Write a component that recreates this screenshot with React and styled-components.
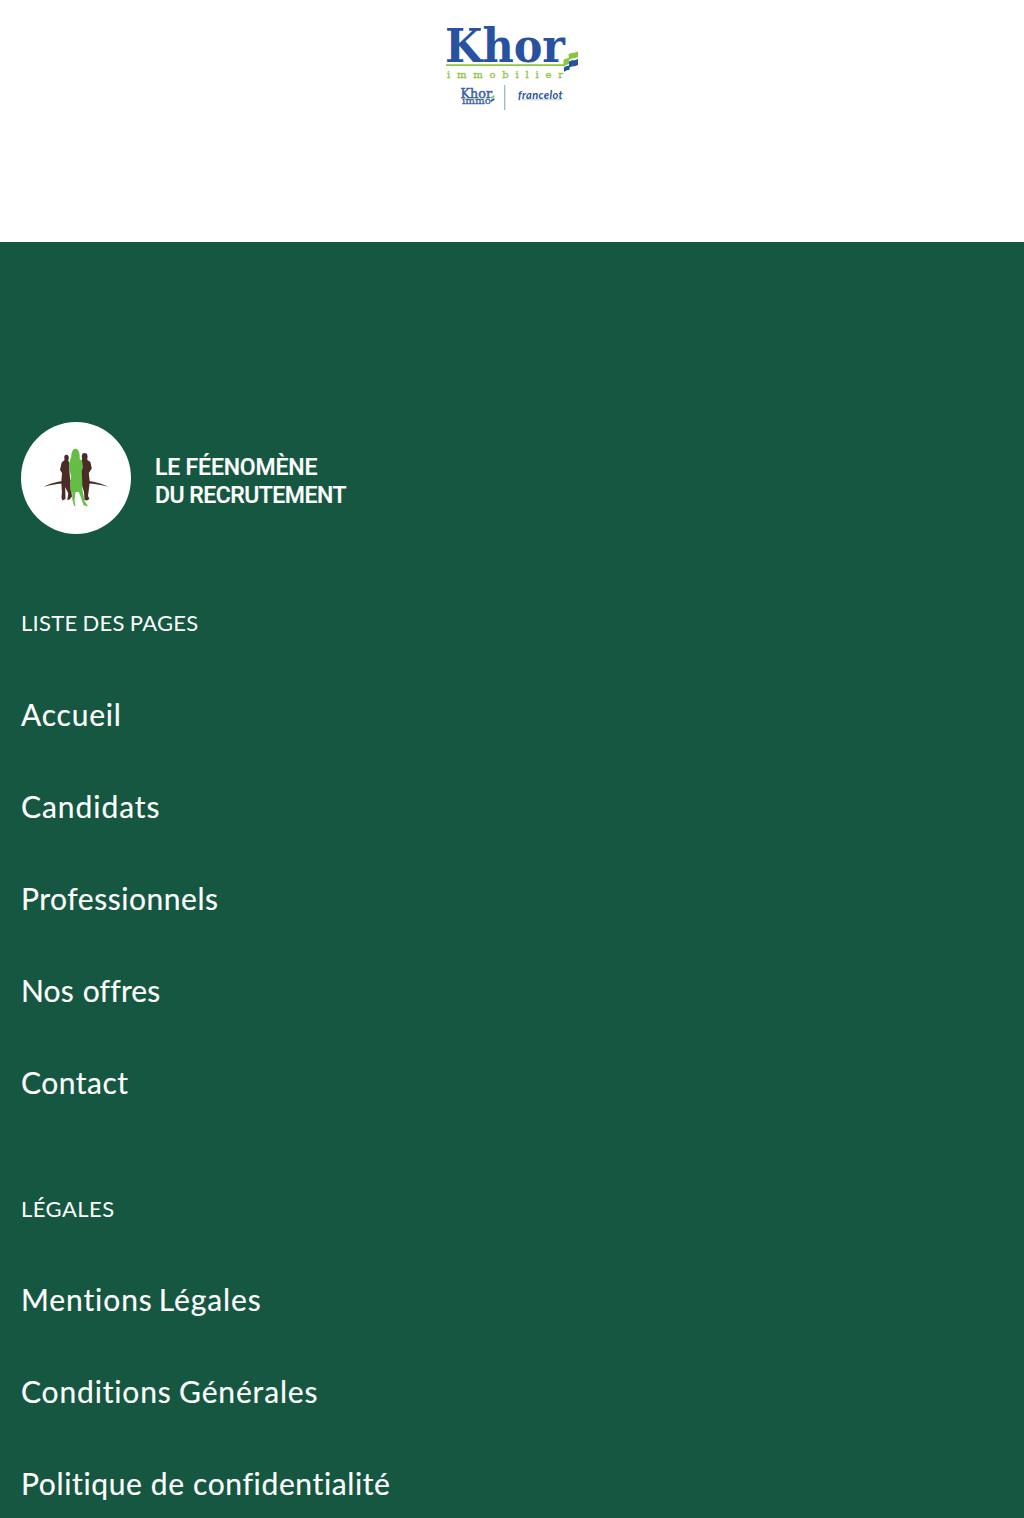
import React from "react";
import styled, { createGlobalStyle } from "styled-components";

const GlobalStyle = createGlobalStyle`
  * { box-sizing: border-box; }
  body { margin: 0; background: #fff; font-family: Lato, sans-serif; }
`;

const Page = styled.div`
  height: 1518px;
  overflow: hidden;
  display: flex;
  flex-direction: column;
`;

const PartnerStrip = styled.header`
  flex: none;
  height: 242px;
  display: flex;
  justify-content: center;
  align-items: flex-start;
`;

const PartnerLogo = styled.svg`
  width: 140px;
  height: 116px;
  display: block;
`;

const Footer = styled.footer`
  flex: 1;
  background: #155740;
  color: #fff;
  padding: 180px 20px 0 21px;
`;

const Brand = styled.a`
  display: flex;
  align-items: center;
  gap: 24px;
  height: 112px;
  margin-bottom: 43px;
`;

const Emblem = styled.svg`
  flex: none;
  width: 110px;
  height: 112px;
`;

const BrandName = styled.div`
  font-family: Roboto, sans-serif;
  font-weight: 500;
  font-size: 23px;
  line-height: 27.5px;
  padding-top: 7px;
  -webkit-text-stroke: 0.2px #fff;
`;

const BrandLine = styled.span`
  display: block;
  width: max-content;
  letter-spacing: ${(p) => p.$tracking}px;
`;

const LinkGroup = styled.nav`
  margin-bottom: 34px;
`;

const GroupTitle = styled.h2`
  margin: 0;
  height: ${(p) => p.$height}px;
  display: flex;
  align-items: center;
  font-size: 22px;
  font-weight: 400;
  line-height: 26px;
  text-transform: uppercase;
  word-spacing: -1px;
  letter-spacing: ${(p) => p.$tracking}px;
`;

const FooterLink = styled.a`
  height: 92px;
  width: max-content;
  display: flex;
  align-items: center;
  padding-bottom: 2px;
  font-size: 30px;
  line-height: 36px;
  -webkit-text-stroke: 0.15px #fff;
  letter-spacing: ${(p) => p.$tracking}px;
  word-spacing: ${(p) => p.$wordGap || 0}px;
`;

const groups = [
  {
    title: "Liste des pages",
    tracking: 0.3,
    height: 92,
    links: [
      ["Accueil", 0.8],
      ["Candidats", 0.94],
      ["Professionnels", 0.53],
      ["Nos offres", 0.15, 1],
      ["Contact", 0.5],
    ],
  },
  {
    title: "Légales",
    tracking: 0.45,
    height: 91,
    links: [
      ["Mentions Légales", 0.9, -2.5],
      ["Conditions Générales", 0.84, -1],
      ["Politique de confidentialité", 0.63],
    ],
  },
];

function KhorLogo() {
  return (
    <PartnerLogo viewBox="442 0 140 116" role="img" aria-label="Khor immobilier">
      <g fontFamily="'DejaVu Serif', serif" fontWeight="700">
        <text x="445" y="62" fontSize="47" fill="#2852a0" textLength="120" lengthAdjust="spacingAndGlyphs">Khor</text>
        <text x="447" y="77.5" fontSize="10" fontWeight="400" fill="#8cc63f" stroke="#8cc63f" strokeWidth="0.3" textLength="116" lengthAdjust="spacing">immobilier</text>
        <text x="460.5" y="97.5" fontSize="12.5" fontWeight="400" fill="#3c60a6" stroke="#3c60a6" strokeWidth="0.5" textLength="31.5" lengthAdjust="spacingAndGlyphs">Khor</text>
        <text x="462" y="104" fontSize="8.5" fontWeight="400" fill="#3c60a6" stroke="#3c60a6" strokeWidth="0.3" textLength="29" lengthAdjust="spacingAndGlyphs">immo</text>
      </g>
      <path d="M446 65.2H564" stroke="#8cc63f" strokeWidth="1.7" />
      <path d="M568.5 54.5C571.5 52 574 53.5 578 51.5V57C574.5 59 572 57.5 569 60Z" fill="#8cc63f" />
      <path d="M563.5 60C565.5 58 567 58.5 569 58V64C567 64.5 565.5 65 563.5 67Z" fill="#8cc63f" />
      <path d="M569 61.5C572 59.5 574.5 61 578 59V65C574.5 67 572 65.5 569 68Z" fill="#2852a0" />
      <path d="M564 67.5C566 65.5 567.5 66 569.5 65.5V70C567 70 566 70.5 564 72Z" fill="#2852a0" />
      <path d="M461 98.5H489" stroke="#a9d070" strokeWidth="0.6" />
      <path d="M491 97L494.5 95V97L491 99Z" fill="#8cc63f" />
      <path d="M491 100L494.5 98V100L491 102Z" fill="#2852a0" />
      <path d="M504.7 85V110" stroke="#9aadd0" strokeWidth="1.2" />
      <text x="518" y="98.5" fontFamily="Lato, sans-serif" fontStyle="italic" fontWeight="700" fontSize="11" fill="#2852a0" textLength="44.5" lengthAdjust="spacing">francelot</text>
      <path d="M522 99.8H562" stroke="#aac0bd" strokeWidth="0.7" />
    </PartnerLogo>
  );
}

function BrandEmblem() {
  return (
    <Emblem viewBox="21 422 110 112" preserveAspectRatio="none" aria-hidden="true">
      <ellipse cx="76" cy="478" rx="55" ry="56" fill="#fff" />
      <g fill="#4a2b25">
        <path d="M43.5 486.8C54 481.5 64 480.2 76 480.2S97 481.5 108.5 486.8C98 484 88 483 76 483S54 484 43.5 486.8Z" />
        <path d="M66.5 454.8C64.3 454.8 63.9 457 64.6 459.6C64.6 461 61.8 461.5 61.5 463L60 470L62 473L61.3 482L61.9 492L61.5 498L62.5 500.5L65.5 499L65.2 487L68.3 493.5L67.3 500L69.5 499.5L72 496.5L70.5 484L69.5 472V463L68.2 460.5C69.3 458.5 69.1 454.8 66.5 454.8Z" />
        <path d="M84.5 453C81.8 453 81.4 456 82.2 459L81 462L81.5 484L84 492L84.5 500L87 500.5L89.5 499L88 496L89.8 482L88.8 473L91.8 468.5L90.5 462.5C89.8 461 88 461 87.2 459.5C88 456.5 87.8 453 84.5 453Z" />
      </g>
      <path d="M75.5 448.8C72.5 448.8 71.5 453 71.3 456L70.2 460L69.3 463L70 472L71 476L70 483L70.3 490.5L72.3 492.5L72.2 499L74 505.5L75.5 506.5L74.5 500L75.5 492H78.8L81.5 499L83.5 505L87.5 506.5L87.3 505L84.7 501.5L82.4 490L82.2 480L81.5 472L83 467L82 460.5L79.7 459C80 454 79 448.8 75.5 448.8Z" fill="#65bd46" />
    </Emblem>
  );
}

export default function App() {
  return (
    <Page>
      <GlobalStyle />
      <PartnerStrip>
        <KhorLogo />
      </PartnerStrip>
      <Footer>
        <Brand>
          <BrandEmblem />
          <BrandName>
            <BrandLine $tracking={-0.18}>LE FÉENOMÈNE</BrandLine>
            <BrandLine $tracking={-0.5}>DU RECRUTEMENT</BrandLine>
          </BrandName>
        </Brand>
        {groups.map((group) => (
          <LinkGroup key={group.title}>
            <GroupTitle $tracking={group.tracking} $height={group.height}>{group.title}</GroupTitle>
            {group.links.map(([label, tracking, wordGap]) => (
              <FooterLink key={label} $tracking={tracking} $wordGap={wordGap}>{label}</FooterLink>
            ))}
          </LinkGroup>
        ))}
      </Footer>
    </Page>
  );
}
